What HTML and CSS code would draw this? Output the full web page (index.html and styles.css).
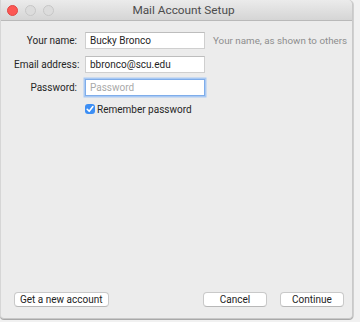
FILE: index.html
```html
<!DOCTYPE html>
<html lang="en">
<head>
    <meta charset="UTF-8">
    <meta name="viewport" content="width=device-width, initial-scale=1.0">
    <title>Mail Account Setup</title>
    <link rel="stylesheet" href="styles.css">
</head>
<body>
    <div class="window">
        <div class="titlebar">
            <div class="lights">
                <span class="light close"></span>
                <span class="light"></span>
                <span class="light"></span>
            </div>
            <div class="title">Mail Account Setup</div>
        </div>

        <div class="content">
            <div class="form">
                <label class="label">Your name:</label>
                <input type="text" class="field" value="Bucky Bronco">
                <span class="hint">Your name, as shown to others</span>

                <label class="label">Email address:</label>
                <input type="text" class="field" value="bbronco@scu.edu">
                <span></span>

                <label class="label">Password:</label>
                <input type="password" class="field focused" placeholder="Password">
                <span></span>

                <span></span>
                <div class="remember">
                    <span class="checkbox">
                        <svg width="10" height="10" viewBox="0 0 10 10">
                            <path d="M2.2 5.3 L4.2 7.3 L7.9 2.6" fill="none" stroke="white" stroke-width="1.6" stroke-linecap="round" stroke-linejoin="round"/>
                        </svg>
                    </span>
                    Remember password
                </div>
                <span></span>
            </div>

            <div class="footer">
                <button class="btn">Get a new account</button>
                <div class="footer-right">
                    <button class="btn wide">Cancel</button>
                    <button class="btn wide">Continue</button>
                </div>
            </div>
        </div>
    </div>
</body>
</html>
```

FILE: styles.css
```css
* {
    margin: 0;
    padding: 0;
    box-sizing: border-box;
}

body {
    background: #f1f1f1;
    font-family: Roboto, "Liberation Sans", Arial, sans-serif;
    font-size: 10px;
    color: #262626;
    width: 360px;
    height: 322px;
    overflow: hidden;
}

.window {
    width: 353px;
    height: 319px;
    background: #ececec;
    border: 1px solid #c9c9c9;
    border-top: none;
    border-left-color: #d6d6d6;
    border-radius: 0 5px 4px 4px;
    box-shadow: 0 1px 0 #a9a9a9, 1px 0 0 #d0d0d0;
    display: flex;
    flex-direction: column;
    overflow: hidden;
}

.titlebar {
    height: 21px;
    flex-shrink: 0;
    background: linear-gradient(#ebebeb, #d5d5d5);
    border-bottom: 1px solid #b9b9b9;
    display: flex;
    align-items: center;
    position: relative;
}

.lights {
    display: flex;
    gap: 7px;
    padding-left: 6px;
}

.light {
    width: 11px;
    height: 11px;
    border-radius: 50%;
    background: #dcdcdc;
    border: 1px solid #c6c6c6;
}

.light.close {
    background: #fc5753;
    border-color: #df4744;
}

.title {
    position: absolute;
    left: 0;
    right: 0;
    top: 3px;
    text-align: center;
    padding-left: 14px;
    font-size: 11.8px;
    color: #4c4c4c;
}

.content {
    flex: 1;
    display: flex;
    flex-direction: column;
    padding: 11px 0 11px 13px;
}

.form {
    display: grid;
    grid-template-columns: 63px 120px auto;
    grid-template-rows: 17px 17px 17px 12px;
    column-gap: 8px;
    row-gap: 6.5px;
    align-items: center;
}

.form .remember {
    margin-top: 1.5px;
}

.label {
    text-align: right;
    color: #262626;
    white-space: nowrap;
}

.field {
    height: 17px;
    width: 120px;
    border: 1px solid #cfcfcf;
    border-top-color: #bdbdbd;
    background: #fff;
    padding: 0 4px;
    font-family: Roboto, "Liberation Sans", Arial, sans-serif;
    font-size: 10px;
    color: #1f1f1f;
    outline: none;
}

.field.focused {
    border: 1px solid #7fadea;
    box-shadow: 0 0 0 1.5px #a9c9f3;
}

.field::placeholder {
    color: #a9a9a9;
}

.hint {
    font-size: 9.8px;
    color: #8e8e8e;
    white-space: nowrap;
}

.remember {
    display: flex;
    align-items: center;
    gap: 2px;
    white-space: nowrap;
    color: #262626;
}

.checkbox {
    width: 10px;
    height: 10px;
    border-radius: 3px;
    background: #3c8ef4;
    display: flex;
    align-items: center;
    justify-content: center;
}

.footer {
    margin-top: auto;
    display: flex;
    justify-content: space-between;
    align-items: center;
    padding-right: 8px;
}

.footer-right {
    display: flex;
    gap: 13px;
}

.btn {
    height: 15px;
    padding: 0 5px;
    background: #fff;
    border: 1px solid #c9c9c9;
    border-bottom-color: #b8b8b8;
    border-radius: 4px;
    font-family: Roboto, "Liberation Sans", Arial, sans-serif;
    font-size: 10px;
    color: #232323;
    line-height: 13px;
}

.btn.wide {
    width: 64px;
}
```
